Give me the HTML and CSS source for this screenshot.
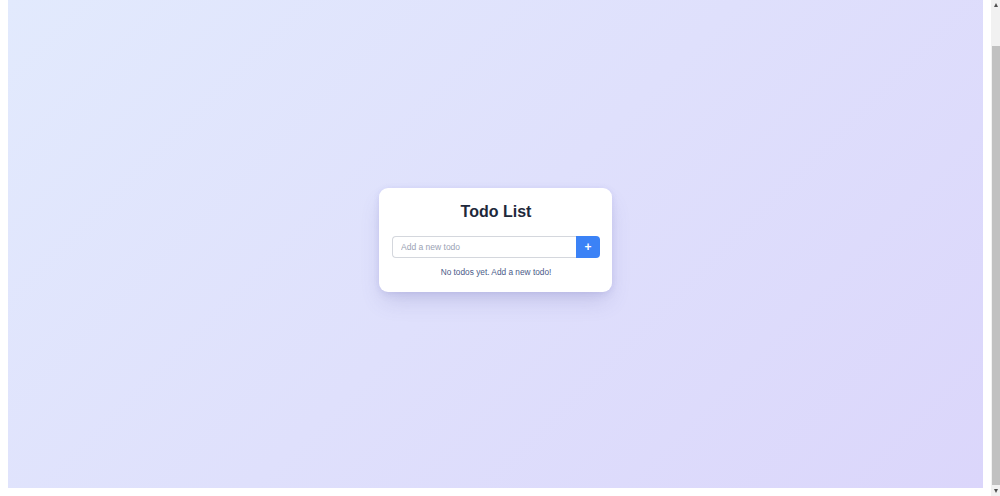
FILE: index.html
```html
<!DOCTYPE html>
<html lang="en">
<head>
<meta charset="utf-8">
<title>Todo List</title>
<link rel="stylesheet" href="styles.css">
</head>
<body>
<div class="page">
  <div class="card">
    <h1 class="title">Todo List</h1>
    <form class="add-form">
      <input class="add-input" type="text" placeholder="Add a new todo">
      <button class="add-btn" type="button">+</button>
    </form>
    <p class="empty">No todos yet. Add a new todo!</p>
  </div>
</div>
<div class="scrollbar" aria-hidden="true">
  <div class="sb-btn sb-up"></div>
  <div class="sb-track"><div class="sb-thumb"></div></div>
  <div class="sb-btn sb-down"></div>
</div>
<script src="script.js"></script>
</body>
</html>
```

FILE: styles.css
```css
html, body {
  font-family: "Liberation Sans", Arial, sans-serif;
}
body {
  margin: 8px 17px 8px 8px;
  background: #ffffff;
}
.page {
  min-height: 100vh;
  display: flex;
  align-items: center;
  justify-content: center;
  background: linear-gradient(135deg, #e2eafd 0%, #dfe0fc 50%, #dbd6fb 100%);
}
.card {
  width: 233px;
  box-sizing: border-box;
  background: #ffffff;
  border-radius: 9px;
  padding: 15px 12px 14px 13px;
  box-shadow: 0 12px 22px -4px rgba(90, 90, 160, 0.20), 0 4px 10px -2px rgba(90, 90, 160, 0.10), 0 0 6px rgba(120, 120, 200, 0.08);
}
.title {
  margin: 0 0 15px;
  font-size: 16px;
  line-height: 18px;
  font-weight: 700;
  text-align: center;
  color: #1e293b;
}
.add-form {
  display: flex;
  margin: 0;
}
.add-input {
  flex: 1;
  min-width: 0;
  height: 22px;
  box-sizing: border-box;
  border: 1px solid #d4d7dd;
  border-right: none;
  border-radius: 4px 0 0 4px;
  padding: 0 8px;
  font-family: "Liberation Sans", Arial, sans-serif;
  font-size: 8.5px;
  color: #374151;
  outline: none;
  background: #fff;
}
.add-input::placeholder {
  color: #9aa2b4;
}
.add-btn {
  width: 24px;
  height: 22px;
  border: none;
  border-radius: 0 4px 4px 0;
  background: #3b82f6;
  color: #ffffff;
  font-family: "Liberation Sans", Arial, sans-serif;
  font-size: 12px;
  font-weight: 700;
  line-height: 22px;
  padding: 0;
}
.empty {
  margin: 8px 0 0;
  font-size: 8.3px;
  line-height: 12px;
  text-align: center;
  color: #4a5a88;
}

/* drawn window scrollbar (browser chrome overlay) */
.scrollbar {
  position: fixed;
  top: 0;
  right: 0;
  bottom: 0;
  width: 9px;
  background: #f1f1f1;
  display: flex;
  flex-direction: column;
}
.sb-btn {
  height: 10px;
  display: flex;
  align-items: center;
  justify-content: center;
}
.sb-up::before {
  content: "";
  border-left: 2.5px solid transparent;
  border-right: 2.5px solid transparent;
  border-bottom: 4px solid #505050;
}
.sb-down::before {
  content: "";
  border-left: 2.5px solid transparent;
  border-right: 2.5px solid transparent;
  border-top: 4px solid #505050;
}
.sb-track {
  flex: 1;
  display: flex;
  flex-direction: column;
  justify-content: flex-end;
  padding-bottom: 1px;
}
.sb-thumb {
  height: 439px;
  margin-left: 1px;
  background: #c1c1c1;
}
```

FILE: script.js
```js
window.scrollTo(0, document.documentElement.scrollHeight);
window.addEventListener('load', function () {
  window.scrollTo(0, document.documentElement.scrollHeight);
});
```
